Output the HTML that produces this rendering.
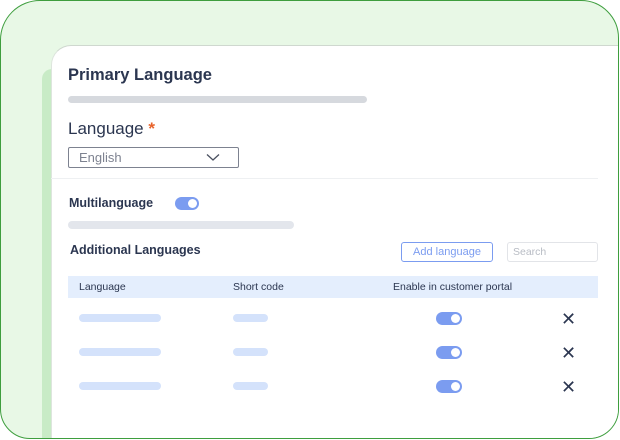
<!DOCTYPE html>
<html><head><style>
*{margin:0;padding:0;box-sizing:border-box}
html,body{width:620px;height:440px;overflow:hidden}
body{background:#fff;position:relative;font-family:"Liberation Sans",sans-serif;color:#2b3650}
.frame{position:absolute;left:0;top:0;width:619px;height:439px;border:1.3px solid #3e9e3e;border-radius:40px 38px 30px 30px;background:#e8f8e6;overflow:hidden}
.strip{position:absolute;left:41px;top:68px;width:10px;height:370px;background:#c8ebc6;border-radius:12px 0 0 0}
.card{position:absolute;left:50px;top:44px;width:568px;height:394px;background:#fff;border-top:1px solid #cfd8cf;border-left:1px solid #dde5dd;border-radius:20px 0 0 0}
.a{position:absolute}
.bar{position:absolute;border-radius:5px}
.tg{position:absolute;background:#7b9cf0;border-radius:8px}
.tg::after{content:"";position:absolute;right:2px;top:2px;bottom:2px;aspect-ratio:1;background:#fff;border-radius:50%}
.x{position:absolute;font-size:18px;color:#2b3650;line-height:1}
.h{font-size:10.5px;line-height:12px;color:#2b3650}
</style></head><body>
<div class="frame">
<div class="strip"></div>
<div class="card"></div>
</div>
<div class="a" style="left:68px;top:66px;font-size:16.5px;font-weight:bold">Primary Language</div>
<div class="bar" style="left:68px;top:96px;width:299px;height:7px;background:#d6d9de"></div>
<div class="a" style="left:68px;top:119px;font-size:17px">Language <span style="color:#e8622a;font-weight:bold">*</span></div>
<div class="a" style="left:68px;top:147px;width:171px;height:21px;border:1px solid #7d8290;border-radius:2px"></div>
<div class="a" style="left:79px;top:150px;font-size:13px;color:#7d8290">English</div>
<svg class="a" style="left:206px;top:153px" width="14" height="9"><path d="M1 1.5 L7 7 L13 1.5" fill="none" stroke="#4a5060" stroke-width="1.3"/></svg>
<div class="a" style="left:51px;top:178px;width:547px;height:1px;background:#eef0f2"></div>
<div class="a" style="left:69px;top:196px;font-size:12.5px;font-weight:bold">Multilanguage</div>
<div class="tg" style="left:175px;top:197px;width:24px;height:13px"></div>
<div class="bar" style="left:68px;top:221px;width:226px;height:8px;background:#e3e6ec"></div>
<div class="a" style="left:70px;top:243px;font-size:12.5px;font-weight:bold">Additional Languages</div>
<div class="a" style="left:401px;top:242px;width:92px;height:20px;border:1px solid #7b9cf0;border-radius:3px;color:#7b9cf0;font-size:11px;text-align:center;line-height:18px">Add language</div>
<div class="a" style="left:507px;top:242px;width:91px;height:20px;border:1px solid #e2e4e8;border-radius:3px;color:#b8bcc4;font-size:10.5px;padding-left:5px;line-height:18px">Search</div>
<div class="a" style="left:68px;top:276px;width:530px;height:22px;background:#e4eefd"></div>
<div class="a h" style="left:79px;top:281px">Language</div>
<div class="a h" style="left:233px;top:281px">Short code</div>
<div class="a h" style="left:393px;top:281px">Enable in customer portal</div>
<div class="bar" style="left:79px;top:314px;width:82px;height:8px;background:#d4e2fb"></div>
<div class="bar" style="left:233px;top:314px;width:35px;height:8px;background:#d4e2fb"></div>
<div class="tg" style="left:436px;top:312px;width:26px;height:13px"></div>
<div class="x" style="left:561px;top:310px">✕</div>
<div class="bar" style="left:79px;top:348px;width:82px;height:8px;background:#d4e2fb"></div>
<div class="bar" style="left:233px;top:348px;width:35px;height:8px;background:#d4e2fb"></div>
<div class="tg" style="left:436px;top:346px;width:26px;height:13px"></div>
<div class="x" style="left:561px;top:344px">✕</div>
<div class="bar" style="left:79px;top:382px;width:82px;height:8px;background:#d4e2fb"></div>
<div class="bar" style="left:233px;top:382px;width:35px;height:8px;background:#d4e2fb"></div>
<div class="tg" style="left:436px;top:380px;width:26px;height:13px"></div>
<div class="x" style="left:561px;top:378px">✕</div>
</body></html>
